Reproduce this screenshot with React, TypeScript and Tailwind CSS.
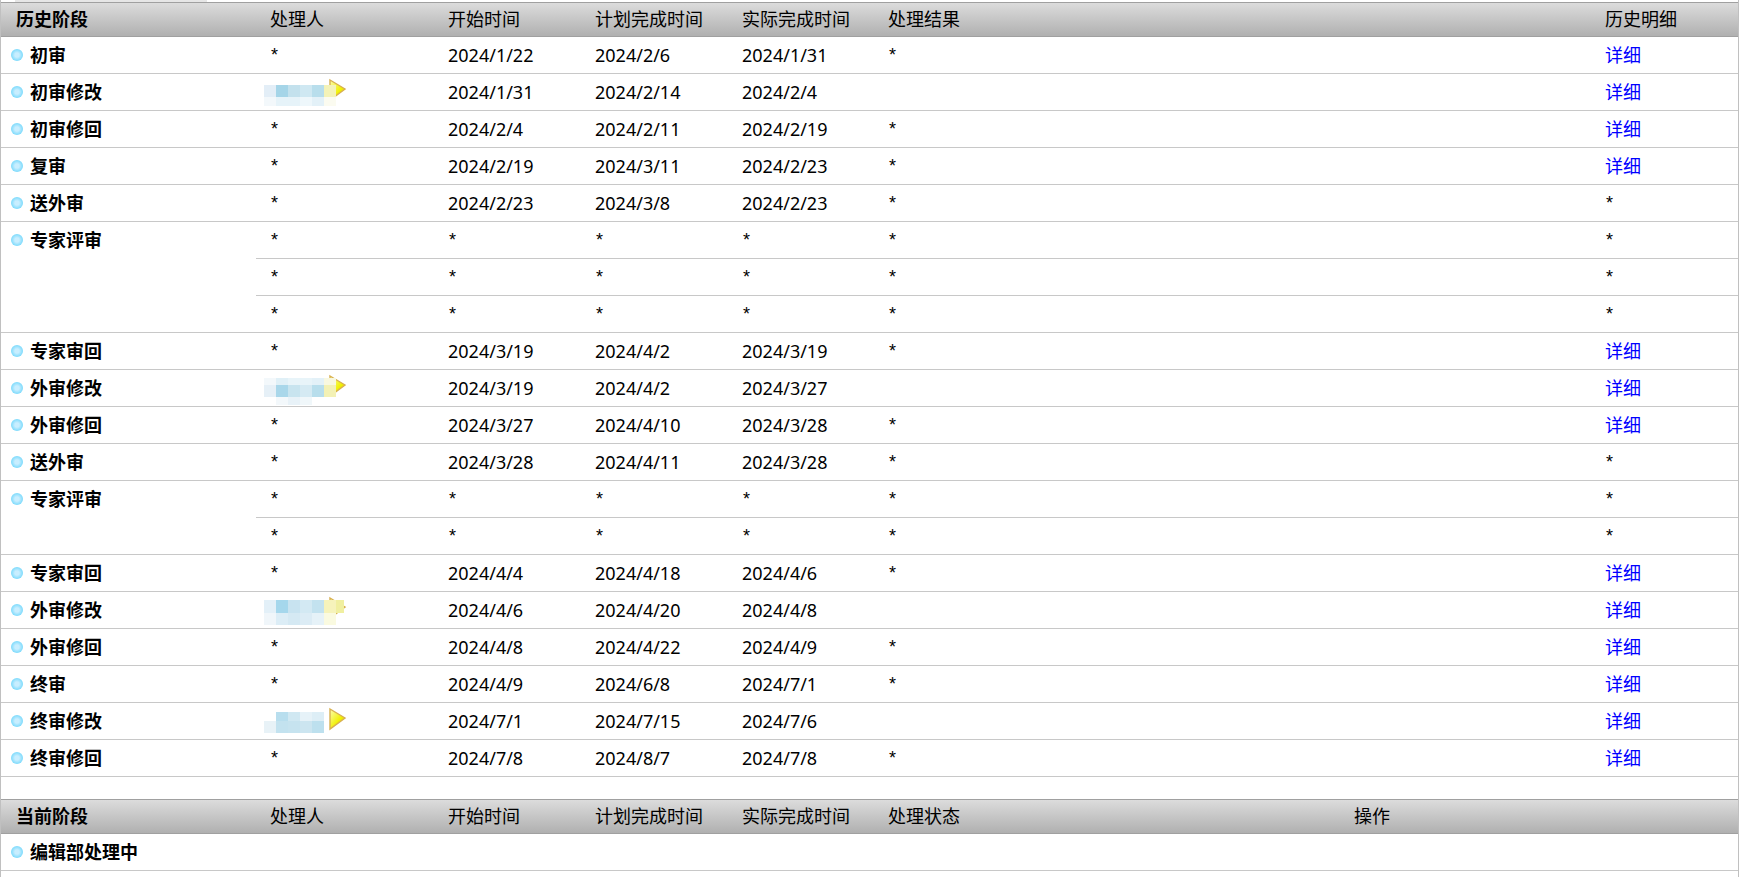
import type { ReactNode } from "react";

type Row = {
  stage?: string;
  span?: number;
  who?: string; // "*" or key of a blurred name
  start: string;
  plan: string;
  actual: string;
  result: string;
  detail: string;
};

const masks: Record<string, { x: number; y: number; w: number; h: number; c: string }[]> = {
  a: [
    ...cells(84 - 73, 12, ["#e3eef7", "#a5d5e8", "#c3e1ed", "#cfe8f2", "#b8deec", "#f4f3b8"]),
    ...cells(96 - 73, 9, ["#f3f8fb", "#e6f3f9", "#e6f3f9", "#eef7fb", "#e3f1f8", "#fbfbf0"]),
  ],
  b: [
    ...cells(377 - 369, 7, ["#f3f8fb", "#e0f0f7", "#e8f4f9", "#e8f4f9", "#e3f1f8", "#f8f8e0"]),
    ...cells(384 - 369, 12, ["#e6f0f7", "#a9d7ea", "#c8e4ef", "#d5eaf3", "#b8deec", "#f3f1b5"]),
    ...cells(396 - 369, 8, ["#ffffff", "#f3f8fb", "#e8f2f8", "#f0f7fa", "#ffffff", "#ffffff"]),
  ],
  c: [
    ...cells(599 - 591, 13, ["#e3f0f8", "#a5d7ec", "#c8e3f0", "#d3e9f3", "#c3e2ef", "#f6f3bb"]),
    { x: 80, y: 8, w: 8, h: 13, c: "#f0efa0" },
    ...cells(612 - 591, 12, ["#f0f6fa", "#dcedf6", "#d5e9f3", "#dcecf5", "#e6f2f8", "#fafae0"]),
  ],
  d: [
    ...cells(711 - 702, 9, ["#ffffff", "#b8deee", "#d0e8f2", "#e6f2f8", "#ddeef6"]),
    ...cells(720 - 702, 12, ["#e8f2f7", "#c3e2ef", "#c6e3ef", "#cce5f0", "#bde0ee"]),
  ],
};

function cells(y: number, h: number, colors: string[]) {
  return colors.map((c, i) => ({ x: 8 + i * 12, y, w: 12, h, c }));
}

function BlurName({ id }: { id: string }) {
  return (
    <svg width="100" height="36" className="block">
      <defs>
        <linearGradient id={`arrow-${id}`} x1="0" y1="0" x2="1" y2="1">
          <stop offset="0" stopColor="#fdfdb0" />
          <stop offset="0.6" stopColor="#f0f000" />
          <stop offset="1" stopColor="#d8d800" />
        </linearGradient>
      </defs>
      <polygon points="74,6 89,15 74,26" fill={`url(#arrow-${id})`} stroke="#d8b050" strokeWidth="1.4" />
      {masks[id].map((m, i) => (
        <rect key={i} x={m.x} y={m.y} width={m.w} height={m.h} fill={m.c} />
      ))}
    </svg>
  );
}

const star = (n: number, stage?: string): Row => ({
  stage,
  span: stage ? n : undefined,
  who: "*",
  start: "*",
  plan: "*",
  actual: "*",
  result: "*",
  detail: "*",
});

const d = (
  stage: string,
  who: string,
  start: string,
  plan: string,
  actual: string,
  result = "*",
  detail = "详细"
): Row => ({ stage, who, start, plan, actual, result, detail });

const history: Row[] = [
  d("初审", "*", "2024/1/22", "2024/2/6", "2024/1/31"),
  d("初审修改", "a", "2024/1/31", "2024/2/14", "2024/2/4", ""),
  d("初审修回", "*", "2024/2/4", "2024/2/11", "2024/2/19"),
  d("复审", "*", "2024/2/19", "2024/3/11", "2024/2/23"),
  d("送外审", "*", "2024/2/23", "2024/3/8", "2024/2/23", "*", "*"),
  star(3, "专家评审"),
  star(0),
  star(0),
  d("专家审回", "*", "2024/3/19", "2024/4/2", "2024/3/19"),
  d("外审修改", "b", "2024/3/19", "2024/4/2", "2024/3/27", ""),
  d("外审修回", "*", "2024/3/27", "2024/4/10", "2024/3/28"),
  d("送外审", "*", "2024/3/28", "2024/4/11", "2024/3/28", "*", "*"),
  star(2, "专家评审"),
  star(0),
  d("专家审回", "*", "2024/4/4", "2024/4/18", "2024/4/6"),
  d("外审修改", "c", "2024/4/6", "2024/4/20", "2024/4/8", ""),
  d("外审修回", "*", "2024/4/8", "2024/4/22", "2024/4/9"),
  d("终审", "*", "2024/4/9", "2024/6/8", "2024/7/1"),
  d("终审修改", "d", "2024/7/1", "2024/7/15", "2024/7/6", ""),
  d("终审修回", "*", "2024/7/8", "2024/8/7", "2024/7/8"),
];

function Th({ children, first }: { children?: ReactNode; first?: boolean }) {
  return (
    <th
      className={`h-[35px] border-y border-[#a0a0a0] bg-gradient-to-b from-[#dcdcdc] to-[#b0b0b0] p-0 pb-[2px] text-left align-middle ${
        first ? "pl-[15px] font-bold" : "pl-[14px] font-normal"
      }`}
    >
      {children}
    </th>
  );
}

function Td({ children }: { children?: ReactNode }) {
  return (
    <td className="h-[37px] border-b border-[#c8c8c8] p-0 pl-[14px] align-middle">
      {children === "*" ? (
        <span className="relative -top-[1px] pl-[1px] font-['Liberation_Sans',sans-serif]">*</span>
      ) : (
        children
      )}
    </td>
  );
}

function StageCell({ name, span }: { name: string; span?: number }) {
  return (
    <td rowSpan={span} className="border-b border-[#c8c8c8] p-0 align-top">
      <div className="flex h-[36px] items-center gap-[7px] pl-[10px] font-bold">
        <span className="h-[12px] w-[12px] rounded-full bg-[radial-gradient(circle,#c8eeff_25%,#6cd6fb_80%,#a8e6fd_100%)]" />
        {name}
      </div>
    </td>
  );
}

export default function App() {
  return (
    <div className="h-screen w-[1739px] overflow-hidden border-x border-[#c0c0c0] bg-white font-['Noto_Sans','Noto_Sans_CJK_SC',sans-serif] text-[18px] leading-none text-black">
      <div className="ml-[14px] h-[2px] w-[192px] bg-[#e6e6e6]" />

      <table className="w-full table-fixed border-separate border-spacing-0">
        <colgroup>
          <col className="w-[255px]" />
          <col className="w-[178px]" />
          <col className="w-[147px]" />
          <col className="w-[147px]" />
          <col className="w-[146px]" />
          <col className="w-[717px]" />
          <col />
        </colgroup>
        <thead>
          <tr>
            <Th first>历史阶段</Th>
            <Th>处理人</Th>
            <Th>开始时间</Th>
            <Th>计划完成时间</Th>
            <Th>实际完成时间</Th>
            <Th>处理结果</Th>
            <Th>历史明细</Th>
          </tr>
        </thead>
        <tbody>
          {history.map((r, i) => (
            <tr key={i}>
              {r.stage && <StageCell name={r.stage} span={r.span} />}
              {r.who === "*" ? (
                <Td>*</Td>
              ) : (
                <td className="h-[37px] border-b border-[#c8c8c8] p-0 align-top">
                  <BlurName id={r.who!} />
                </td>
              )}
              <Td>{r.start}</Td>
              <Td>{r.plan}</Td>
              <Td>{r.actual}</Td>
              <Td>{r.result}</Td>
              <Td>{r.detail === "详细" ? <a className="text-[#0000ff]">详细</a> : r.detail}</Td>
            </tr>
          ))}
        </tbody>
      </table>

      <table className="mt-[22px] w-full table-fixed border-separate border-spacing-0">
        <colgroup>
          <col className="w-[255px]" />
          <col className="w-[178px]" />
          <col className="w-[147px]" />
          <col className="w-[147px]" />
          <col className="w-[146px]" />
          <col className="w-[466px]" />
          <col />
        </colgroup>
        <thead>
          <tr>
            <Th first>当前阶段</Th>
            <Th>处理人</Th>
            <Th>开始时间</Th>
            <Th>计划完成时间</Th>
            <Th>实际完成时间</Th>
            <Th>处理状态</Th>
            <Th>操作</Th>
          </tr>
        </thead>
        <tbody>
          <tr>
            <StageCell name="编辑部处理中" />
            <Td />
            <Td />
            <Td />
            <Td />
            <Td />
            <Td />
          </tr>
        </tbody>
      </table>
    </div>
  );
}
